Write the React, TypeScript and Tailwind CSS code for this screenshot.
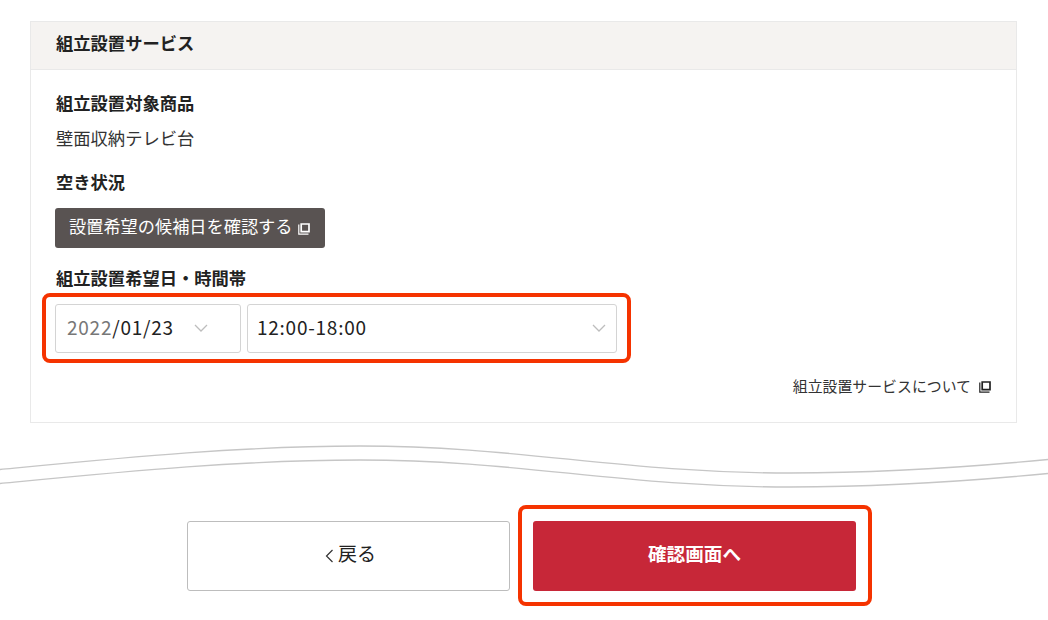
import React from "react";

const font = "font-['Meiryo','Noto_Sans_CJK_JP','Noto_Sans',sans-serif]";

const WindowIcon: React.FC<{ className?: string }> = ({ className }) => (
  <svg viewBox="0 0 12 12" className={className} fill="none" stroke="currentColor">
    <path d="M3.2 1h7.8v7.6h-7.8z" strokeWidth="1.7" />
    <path d="M0.8 1.5v9.7h9.7" strokeWidth="1.2" />
  </svg>
);

const Chevron: React.FC = () => (
  <svg viewBox="0 0 14 8" className="w-[14px] h-2" fill="none" stroke="#bdbdbd" strokeWidth="1.3">
    <path d="M1 1l6 6 6-6" />
  </svg>
);

const Label: React.FC<{ children: React.ReactNode }> = ({ children }) => (
  <p className="ml-px text-[17.3px] leading-[24px] font-bold text-[#222]">{children}</p>
);

const App: React.FC = () => {
  return (
    <div className={`w-[1048px] h-[620px] bg-white overflow-hidden pt-[21px] ${font}`}>
      <section className="ml-[30px] w-[987px] h-[402px] border border-[#e9e9e9]">
        <h2 className="h-[48px] pl-[25px] pb-[5px] flex items-center bg-[#f5f3f1] border-b border-[#e9e9e9] text-[17.3px] font-bold text-[#222]">
          組立設置サービス
        </h2>
        <div className="pl-[24px] pr-[25px] pt-[21px]">
          <Label>組立設置対象商品</Label>
          <p className="ml-px mt-[11px] text-[17.3px] leading-[24px] text-[#333]">壁面収納テレビ台</p>
          <div className="mt-[20px]">
            <Label>空き状況</Label>
          </div>
          <button className="mt-[14px] h-[40px] w-[270px] pl-[14px] pb-[4px] flex items-center gap-[6px] bg-[#595352] rounded-[3px] text-[17.2px] text-white">
            設置希望の候補日を確認する
            <WindowIcon className="w-[12px] h-[12px] mt-[6px]" />
          </button>
          <div className="mt-[18px]">
            <Label>組立設置希望日・時間帯</Label>
          </div>
          <div className="relative mt-[14px] flex gap-[6px]">
            <div className="w-[186px] h-[49px] pl-[11px] pr-[32px] pb-[2px] flex items-center justify-between border border-[#d4d4d4] rounded-[3px] text-[19px] tracking-[0.75px] text-[#222]">
              <span>
                <span className="text-[#777]">2022</span>/01/23
              </span>
              <Chevron />
            </div>
            <div className="w-[370px] h-[49px] pl-[9px] pr-[10px] pb-[2px] flex items-center justify-between border border-[#d4d4d4] rounded-[3px] text-[19px] tracking-[0.75px] text-[#222]">
              <span>12:00-18:00</span>
              <Chevron />
            </div>
            <div className="absolute left-[-13px] top-[-11px] w-[589px] h-[70px] border-[4px] border-[#f53300] rounded-[8px]" />
          </div>
          <div className="mt-[22px] flex justify-end items-center gap-[8px] text-[14.9px] leading-[22px] text-[#333]">
            組立設置サービスについて
            <WindowIcon className="w-[12px] h-[12px] mt-[1px] text-[#222]" />
          </div>
        </div>
      </section>

      <svg viewBox="0 0 1048 60" className="block mt-[17px] w-[1048px] h-[60px]" fill="none" stroke="#c6c6c6" strokeWidth="1.3">
        <path d="M0 29.5C120 18 240 6 360 6C520 6 620 33 790 33C880 33 970 27 1048 19.5" />
        <path d="M0 43.5C120 32 240 20 360 20C520 20 620 47 790 47C880 47 970 41 1048 33.5" />
      </svg>

      <div className="mt-[21px] flex justify-center gap-[23px] pr-[5px]">
        <button className="w-[323px] h-[70px] pb-[6px] pl-[4px] flex items-center justify-center gap-[4px] bg-white border border-[#bdbdbd] rounded-[3px] text-[19px] text-[#222]">
          <svg viewBox="0 0 9 14" className="w-[9px] h-[14px] mt-[6px]" fill="none" stroke="#333" strokeWidth="1.2">
            <path d="M7.5 1L1.5 7l6 6" />
          </svg>
          戻る
        </button>
        <div className="relative">
          <button className="w-[323px] h-[70px] pb-[7px] flex items-center justify-center bg-[#c72738] rounded-[3px] text-[18.6px] font-bold text-white">
            確認画面へ
          </button>
          <div className="absolute left-[-15px] top-[-16px] w-[354px] h-[101px] border-[4px] border-[#f53300] rounded-[8px]" />
        </div>
      </div>
    </div>
  );
};

export default App;
